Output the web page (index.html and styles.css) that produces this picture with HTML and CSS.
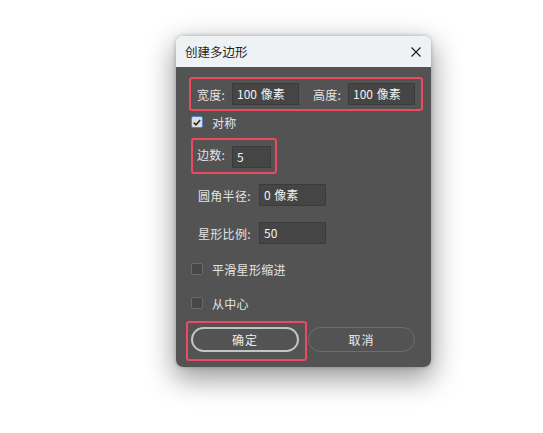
FILE: index.html
```html
<!DOCTYPE html>
<html lang="zh-CN">

<head>
  <meta charset="UTF-8">
  <title>创建多边形</title>
  <link rel="stylesheet" href="styles.css">
</head>

<body>
  <div class="page">
    <div class="dialog">
      <div class="titlebar">
        <span class="title">创建多边形</span>
        <svg class="close" width="10" height="10" viewBox="0 0 10 10">
          <path d="M0.5 0.5 L9.5 9.5 M9.5 0.5 L0.5 9.5" stroke="#1f1f1f" stroke-width="1.2" fill="none" />
        </svg>
      </div>

      <div class="panel">
        <!-- 宽度 / 高度 -->
        <div class="mark mark-size">
          <span class="label">宽度:</span>
          <div class="input w67">100 像素</div>
          <span class="label">高度:</span>
          <div class="input w67">100 像素</div>
        </div>

        <div class="check-row row-sym">
          <span class="box checked">
            <svg width="8" height="7" viewBox="0 0 8 7">
              <path d="M0.8 3.6 L3 5.8 L7.2 1" stroke="#2b2b2b" stroke-width="1.6" fill="none" />
            </svg>
          </span>
          <span>对称</span>
        </div>

        <div class="mark mark-sides">
          <span class="label">边数:</span>
          <div class="input w39">5</div>
        </div>

        <div class="field row-radius">
          <span class="label wide">圆角半径:</span>
          <div class="input w67">0 像素</div>
        </div>

        <div class="field row-ratio">
          <span class="label wide">星形比例:</span>
          <div class="input w67">50</div>
        </div>

        <div class="check-row row-smooth">
          <span class="box"></span>
          <span>平滑星形缩进</span>
        </div>

        <div class="check-row row-center">
          <span class="box"></span>
          <span>从中心</span>
        </div>

        <div class="buttons">
          <div class="mark mark-ok">
            <button type="button" class="btn primary">确定</button>
          </div>
          <button type="button" class="btn">取消</button>
        </div>
      </div>
    </div>
  </div>
</body>

</html>
```

FILE: styles.css
```css
html,
body {
  margin: 0;
  padding: 0;
  background-color: #fff;
  font-family: "Noto Sans CJK SC", "Noto Sans", sans-serif;
}

.page {
  height: 433px;
  padding: 36px 0 0 176px;
  box-sizing: border-box;
}

.dialog {
  width: 255px;
  border-radius: 7px;
  box-shadow: 0 10px 28px 2px rgba(0, 0, 0, 0.4), 0 0 4px rgba(0, 0, 0, 0.25);
}

.titlebar {
  height: 31px;
  background-color: #eff2f4;
  border-radius: 7px 7px 0 0;
  display: flex;
  align-items: center;
  justify-content: space-between;
  padding: 0 10px 0 9px;
  box-sizing: border-box;
}

.title {
  font-size: 12.5px;
  color: #1f1f1f;
}

.close {
  margin-top: 1px;
}

.panel {
  height: 300px;
  background-color: #535353;
  border-radius: 0 0 7px 7px;
  color: #e3e3e3;
  font-size: 12px;
  box-sizing: border-box;
  padding-top: 10px;
}

/* red annotation boxes */
.mark {
  border: 2px solid #ef4960;
  border-radius: 3px;
  box-sizing: border-box;
  display: flex;
  align-items: center;
}

.mark-size {
  width: 234px;
  height: 34px;
  margin-left: 13px;
  padding-left: 6px;
}

.mark-sides {
  width: 86px;
  height: 36px;
  margin: 10px 0 0 15px;
  padding: 6px 0 4px 4px;
  align-items: flex-start;
}

.label {
  width: 35px;
  flex-shrink: 0;
  white-space: nowrap;
  letter-spacing: 0.3px;
}

.label.wide {
  width: 61px;
}

.input {
  height: 22px;
  line-height: 20px;
  background-color: #454545;
  border: 1px solid #3b3b3b;
  box-sizing: border-box;
  padding-left: 4px;
  color: #f2f2f2;
  font-size: 12px;
  white-space: nowrap;
  word-spacing: 1px;
}

.w67 {
  width: 67px;
}

.w39 {
  width: 39px;
}

.mark-size .w67:nth-of-type(1) {
  margin-right: 14px;
}

.field {
  display: flex;
  align-items: center;
  margin-left: 22px;
}

.row-radius {
  margin-top: 10px;
}

.row-ratio {
  margin-top: 16px;
}

.check-row {
  display: flex;
  align-items: center;
  height: 12px;
  margin-left: 15px;
  letter-spacing: 0.3px;
}

.box {
  width: 12px;
  height: 12px;
  box-sizing: border-box;
  border: 1px solid #6a6a6a;
  border-radius: 2px;
  background-color: #474747;
  margin-right: 9px;
  display: flex;
  align-items: center;
  justify-content: center;
}

.box.checked {
  background-color: #dedede;
  border-color: #4b82d6;
}

.row-sym {
  margin-top: 5px;
}

.row-smooth {
  margin-top: 19px;
}

.row-center {
  margin-top: 22px;
}

.buttons {
  display: flex;
  align-items: flex-start;
  margin: 12px 0 0 10px;
}

.mark-ok {
  width: 121px;
  height: 40px;
  padding: 4px 0 0 3px;
  align-items: flex-start;
}

.btn {
  width: 107px;
  height: 25px;
  border-radius: 13px;
  border: 1.5px solid #6e6e6e;
  background-color: #535353;
  color: #ececec;
  font-family: "Noto Sans CJK SC", "Noto Sans", sans-serif;
  font-size: 12px;
  letter-spacing: 1px;
  padding: 0;
  margin: 6px 0 0 1px;
  cursor: pointer;
}

.btn.primary {
  width: 108px;
  border: 2px solid #c4c4c4;
  margin: 0;
}
```
